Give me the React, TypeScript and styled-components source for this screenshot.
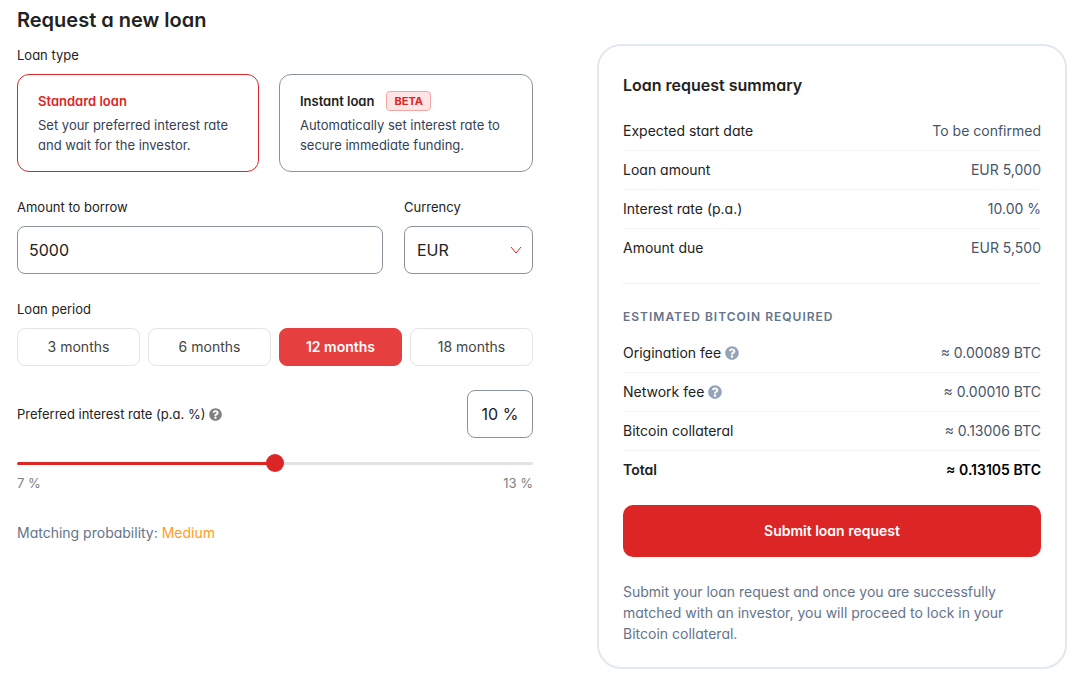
import React, { useState } from "react";
import styled, { createGlobalStyle } from "styled-components";
import { FaQuestionCircle } from "react-icons/fa";

const GlobalStyle = createGlobalStyle`
  *, *::before, *::after { box-sizing: border-box; }
  body {
    margin: 0;
    background: #fff;
    color: #222;
    font-family: Inter, "Noto Sans", sans-serif;
    font-feature-settings: "cv11";
    font-size: 14px;
    line-height: 20px;
  }
  button, input, select { font: inherit; font-feature-settings: inherit; color: inherit; }
`;

const Page = styled.main`
  display: grid;
  grid-template-columns: minmax(0, 258fr) minmax(0, 235fr);
  column-gap: 64px;
  align-items: start;
  padding: 8px 22px 16px 17px;
`;

const Form = styled.form`
  display: flex;
  flex-direction: column;
`;

const Title = styled.h1`
  margin: 0 0 13px;
  font-size: 20px;
  line-height: 24px;
  font-weight: 600;
`;

const Group = styled.fieldset`
  margin: 0;
  padding: 0;
  border: 0;
  min-width: 0;
`;

const Caption = styled.legend`
  display: block;
  padding: 0 0 9px;
  font-size: 13px;
  line-height: 20px;
`;

const FieldLabel = styled.label`
  display: block;
  padding-bottom: 9px;
  font-size: 13px;
  line-height: 20px;
`;

const TypeGrid = styled.div`
  display: grid;
  grid-template-columns: 20fr 21fr;
  gap: 20px;
  margin-bottom: 25px;
`;

const TypeCard = styled.label<{ $active: boolean }>`
  display: block;
  padding: 16px 16px 16px 20px;
  border: 1px solid ${(p) => (p.$active ? "#dc2626" : "#8b949e")};
  border-radius: 12px;
  cursor: pointer;
`;

const HiddenRadio = styled.input`
  position: absolute;
  opacity: 0;
  pointer-events: none;
`;

const TypeName = styled.span<{ $active: boolean }>`
  display: flex;
  align-items: center;
  gap: 12px;
  height: 20px;
  margin-bottom: 4px;
  font-size: 13px;
  font-weight: 600;
  color: ${(p) => (p.$active ? "#dc2626" : "#222")};
`;

const Badge = styled.span`
  padding: 0 7px;
  border: 1px solid #f4a5a5;
  border-radius: 4px;
  background: #fde5e5;
  color: #dc2626;
  font-size: 11px;
  line-height: 18px;
  font-weight: 700;
`;

const TypeText = styled.span`
  display: block;
  font-size: 13px;
  line-height: 20px;
  color: #334155;
`;

const AmountGrid = styled.div`
  display: grid;
  grid-template-columns: minmax(0, 1fr) minmax(0, 129px);
  gap: 21px;
  margin-bottom: 25px;
`;

const TextInput = styled.input`
  display: block;
  width: 100%;
  height: 48px;
  padding: 0 11px;
  border: 1px solid #8b949e;
  border-radius: 8px;
  background: #fff;
  font-size: 16px;
  outline: none;
`;

const SelectWrap = styled.div`
  position: relative;
`;

const Select = styled.select`
  appearance: none;
  display: block;
  width: 100%;
  height: 48px;
  padding: 0 32px 0 12px;
  border: 1px solid #8b949e;
  border-radius: 8px;
  background: #fff;
  font-size: 16px;
  outline: none;
`;

const Chevron = styled.svg`
  position: absolute;
  right: 11px;
  top: 20px;
  width: 12px;
  height: 8px;
  pointer-events: none;
`;

const PeriodGrid = styled.div`
  display: grid;
  grid-template-columns: repeat(4, minmax(0, 1fr));
  gap: 8px;
  margin-bottom: 24px;
`;

const PeriodButton = styled.button<{ $active: boolean }>`
  height: 38px;
  padding: 0;
  border: 1px solid ${(p) => (p.$active ? "#e5403f" : "#e3e4e6")};
  border-radius: 8px;
  background: ${(p) => (p.$active ? "#e5403f" : "#fff")};
  color: ${(p) => (p.$active ? "#fff" : "#444")};
  font-weight: ${(p) => (p.$active ? 600 : 400)};
  cursor: pointer;
`;

const RateRow = styled.div`
  display: flex;
  align-items: center;
  justify-content: space-between;
  margin-bottom: 16px;
`;

const RateLabel = styled.label`
  display: flex;
  align-items: center;
  gap: 4px;
  font-size: 13px;
`;

const RateInput = styled(TextInput)`
  width: 66px;
  padding: 0;
  text-align: center;
`;

const HelpIcon = styled(FaQuestionCircle)<{ $muted?: boolean }>`
  flex: none;
  width: ${(p) => (p.$muted ? 14 : 13)}px;
  height: ${(p) => (p.$muted ? 14 : 13)}px;
  color: ${(p) => (p.$muted ? "#94a3b8" : "#808080")};
`;

const Slider = styled.input`
  appearance: none;
  display: block;
  width: 100%;
  height: 18px;
  margin: 0;
  background: transparent;
  cursor: pointer;

  &::-webkit-slider-runnable-track {
    height: 3px;
    border-radius: 2px;
    background: linear-gradient(to right, #dc2626 var(--fill), #e3e3e3 var(--fill));
  }
  &::-webkit-slider-thumb {
    appearance: none;
    width: 18px;
    height: 18px;
    margin-top: -8px;
    border-radius: 50%;
    background: #dc2626;
  }
`;

const Scale = styled.div`
  display: flex;
  justify-content: space-between;
  margin: 1px 0 30px;
  font-size: 13px;
  color: #808080;
`;

const Probability = styled.p`
  margin: 0;
  color: #64748b;
`;

const Medium = styled.span`
  color: #ff9d1c;
`;

const Card = styled.aside`
  margin-top: 36px;
  padding: 24px 24px 23px;
  border: 2px solid #e2e8f0;
  border-radius: 24px;
`;

const CardTitle = styled.h2`
  margin: 3px 0 15px;
  font-size: 16px;
  line-height: 24px;
  font-weight: 600;
`;

const SummaryTable = styled.table`
  width: 100%;
  border-collapse: separate;
  border-spacing: 0;
`;

const SummaryRow = styled.tr`
  height: 39px;
  & > * { border-bottom: 1px solid #f1f5f9; }
  &:last-child { height: 38px; }
  &:last-child > * { border-bottom: 0; }
`;

const RowLabel = styled.th<{ $strong?: boolean }>`
  padding: 0;
  text-align: left;
  font-weight: ${(p) => (p.$strong ? 600 : 400)};
`;

const LabelContent = styled.span`
  display: flex;
  align-items: center;
  gap: 4px;
`;

const RowValue = styled.td<{ $strong?: boolean }>`
  padding: 0;
  text-align: right;
  color: ${(p) => (p.$strong ? "#000" : "#475569")};
  font-weight: ${(p) => (p.$strong ? 600 : 400)};
`;

const Divider = styled.hr`
  margin: 16px 0 23px;
  border: 0;
  border-top: 1px solid #f0f1f3;
`;

const Subheading = styled.h3`
  margin: 0 0 7px;
  font-size: 12px;
  line-height: 20px;
  font-weight: 600;
  text-transform: uppercase;
  letter-spacing: 1px;
  color: #64748b;
`;

const Submit = styled.button`
  display: block;
  width: 100%;
  height: 52px;
  margin: 16px 0 24px;
  border: 0;
  border-radius: 10px;
  background: #dc2626;
  color: #fff;
  font-weight: 600;
  cursor: pointer;
`;

const Note = styled.p`
  margin: 0;
  font-size: 14px;
  line-height: 21px;
  color: #64748b;
`;

type Line = { label: string; value: string; help?: boolean; strong?: boolean };

const loanLines: Line[] = [
  { label: "Expected start date", value: "To be confirmed" },
  { label: "Loan amount", value: "EUR 5,000" },
  { label: "Interest rate (p.a.)", value: "10.00 %" },
  { label: "Amount due", value: "EUR 5,500" },
];

const bitcoinLines: Line[] = [
  { label: "Origination fee", value: "≈ 0.00089 BTC", help: true },
  { label: "Network fee", value: "≈ 0.00010 BTC", help: true },
  { label: "Bitcoin collateral", value: "≈ 0.13006 BTC" },
  { label: "Total", value: "≈ 0.13105 BTC", strong: true },
];

const loanTypes = [
  { id: "standard", name: "Standard loan", text: "Set your preferred interest rate and wait for the investor." },
  { id: "instant", name: "Instant loan", text: "Automatically set interest rate to secure immediate funding.", beta: true },
];

const periods = [3, 6, 12, 18];

function Summary({ lines }: { lines: Line[] }) {
  return (
    <SummaryTable>
      <tbody>
        {lines.map((line) => (
          <SummaryRow key={line.label}>
            <RowLabel scope="row" $strong={line.strong}>
              <LabelContent>
                {line.label}
                {line.help && <HelpIcon $muted aria-hidden />}
              </LabelContent>
            </RowLabel>
            <RowValue $strong={line.strong}>{line.value}</RowValue>
          </SummaryRow>
        ))}
      </tbody>
    </SummaryTable>
  );
}

export default function App() {
  const [type, setType] = useState("standard");
  const [amount, setAmount] = useState("5000");
  const [period, setPeriod] = useState(12);
  const [rate, setRate] = useState(10);
  const fill = { "--fill": `${((rate - 7) / 6) * 100}%` } as React.CSSProperties;

  return (
    <>
      <GlobalStyle />
      <Page>
        <Form id="loan" onSubmit={(e) => e.preventDefault()}>
          <Title>Request a new loan</Title>
          <Group>
            <Caption>Loan type</Caption>
            <TypeGrid>
              {loanTypes.map((t) => (
                <TypeCard key={t.id} $active={type === t.id}>
                  <HiddenRadio type="radio" name="type" checked={type === t.id} onChange={() => setType(t.id)} />
                  <TypeName $active={type === t.id}>
                    {t.name}
                    {t.beta && <Badge>BETA</Badge>}
                  </TypeName>
                  <TypeText>{t.text}</TypeText>
                </TypeCard>
              ))}
            </TypeGrid>
          </Group>
          <AmountGrid>
            <div>
              <FieldLabel htmlFor="amount">Amount to borrow</FieldLabel>
              <TextInput id="amount" value={amount} onChange={(e) => setAmount(e.target.value)} />
            </div>
            <div>
              <FieldLabel htmlFor="currency">Currency</FieldLabel>
              <SelectWrap>
                <Select id="currency" defaultValue="EUR">
                  <option>EUR</option>
                </Select>
                <Chevron viewBox="0 0 12 8" fill="none" stroke="#dc2626" aria-hidden>
                  <path d="M1 1 L6 7 L11 1" />
                </Chevron>
              </SelectWrap>
            </div>
          </AmountGrid>
          <Group>
            <Caption>Loan period</Caption>
            <PeriodGrid>
              {periods.map((p) => (
                <PeriodButton key={p} type="button" aria-pressed={period === p} $active={period === p} onClick={() => setPeriod(p)}>
                  {p} months
                </PeriodButton>
              ))}
            </PeriodGrid>
          </Group>
          <RateRow>
            <RateLabel htmlFor="rate">
              Preferred interest rate (p.a. %)
              <HelpIcon aria-hidden />
            </RateLabel>
            <RateInput id="rate" value={`${rate} %`} readOnly />
          </RateRow>
          <Slider
            type="range"
            min={7}
            max={13}
            value={rate}
            aria-label="Preferred interest rate"
            style={fill}
            onChange={(e) => setRate(Number(e.target.value))}
          />
          <Scale>
            <span>7 %</span>
            <span>13 %</span>
          </Scale>
          <Probability>
            Matching probability: <Medium>Medium</Medium>
          </Probability>
        </Form>
        <Card>
          <CardTitle>Loan request summary</CardTitle>
          <Summary lines={loanLines} />
          <Divider />
          <Subheading>Estimated Bitcoin required</Subheading>
          <Summary lines={bitcoinLines} />
          <Submit type="submit" form="loan">Submit loan request</Submit>
          <Note>
            Submit your loan request and once you are successfully matched with an investor, you will proceed to lock in
            your Bitcoin collateral.
          </Note>
        </Card>
      </Page>
    </>
  );
}
